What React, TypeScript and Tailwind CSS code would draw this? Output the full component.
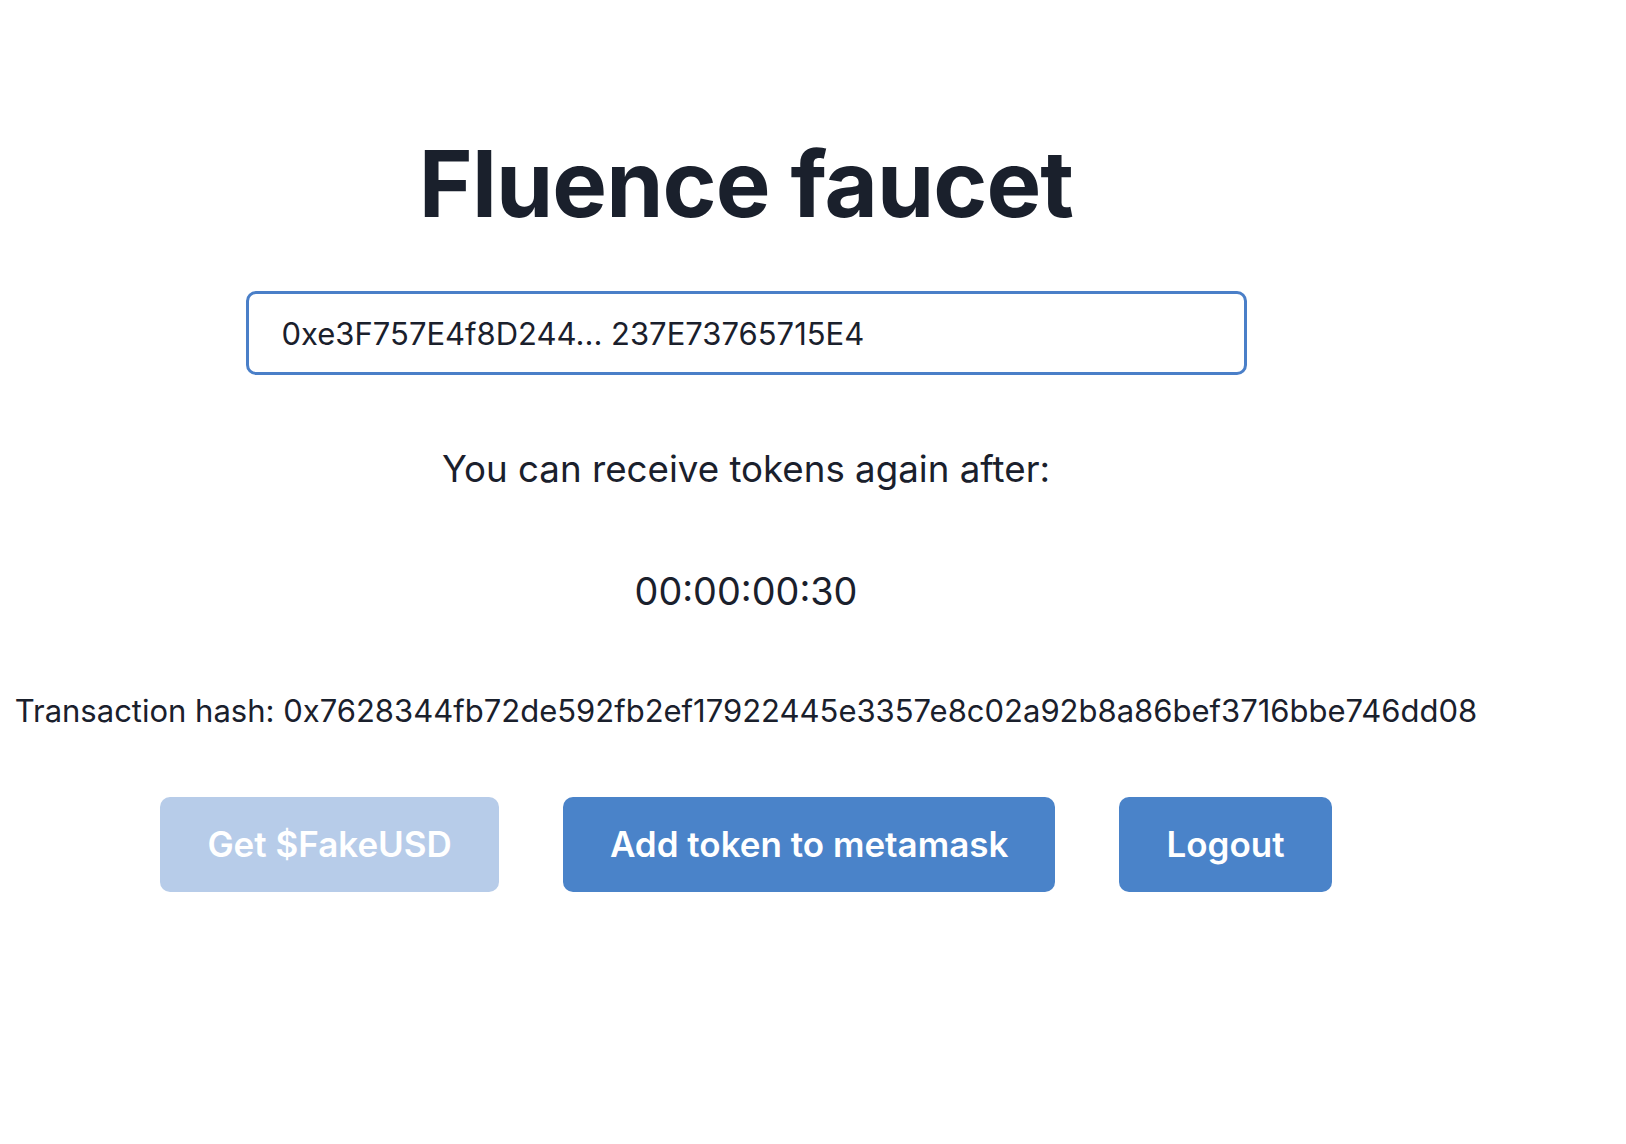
import React from "react";

const App = () => {
  return (
    <div className="min-h-screen bg-white text-[#1a202c] font-['Inter',sans-serif]">
      <div className="w-[1492px] flex flex-col items-center">
        <h1 className="mt-[138px] text-[92px] font-bold leading-none tracking-[-0.01em]">Fluence faucet</h1>
        <input
          className="mt-[61px] w-[1001px] h-[84px] rounded-[10px] border-[3px] border-[#4a7fc8] px-[33px] text-[31px] outline-none"
          defaultValue="0xe3F757E4f8D244... 237E73765715E4"
        />
        <p className="mt-[76px] text-[36.7px] leading-none">You can receive tokens again after:</p>
        <p className="mt-[85px] text-[37.8px] leading-none">00:00:00:30</p>
        <p className="mt-[84px] text-[31px] leading-none whitespace-nowrap">
          Transaction hash: 0x7628344fb72de592fb2ef17922445e3357e8c02a92b8a86bef3716bbe746dd08
        </p>
        <div className="mt-[71px] flex gap-[64px]">
          <button disabled className="h-[95px] px-[47px] rounded-[10px] bg-[#b7cce9] text-white text-[35px] font-semibold">
            Get $FakeUSD
          </button>
          <button className="h-[95px] px-[47px] rounded-[10px] bg-[#4a83c9] text-white text-[35px] font-semibold">
            Add token to metamask
          </button>
          <button className="h-[95px] px-[47px] rounded-[10px] bg-[#4a83c9] text-white text-[35px] font-semibold">
            Logout
          </button>
        </div>
      </div>
    </div>
  );
};

export default App;
